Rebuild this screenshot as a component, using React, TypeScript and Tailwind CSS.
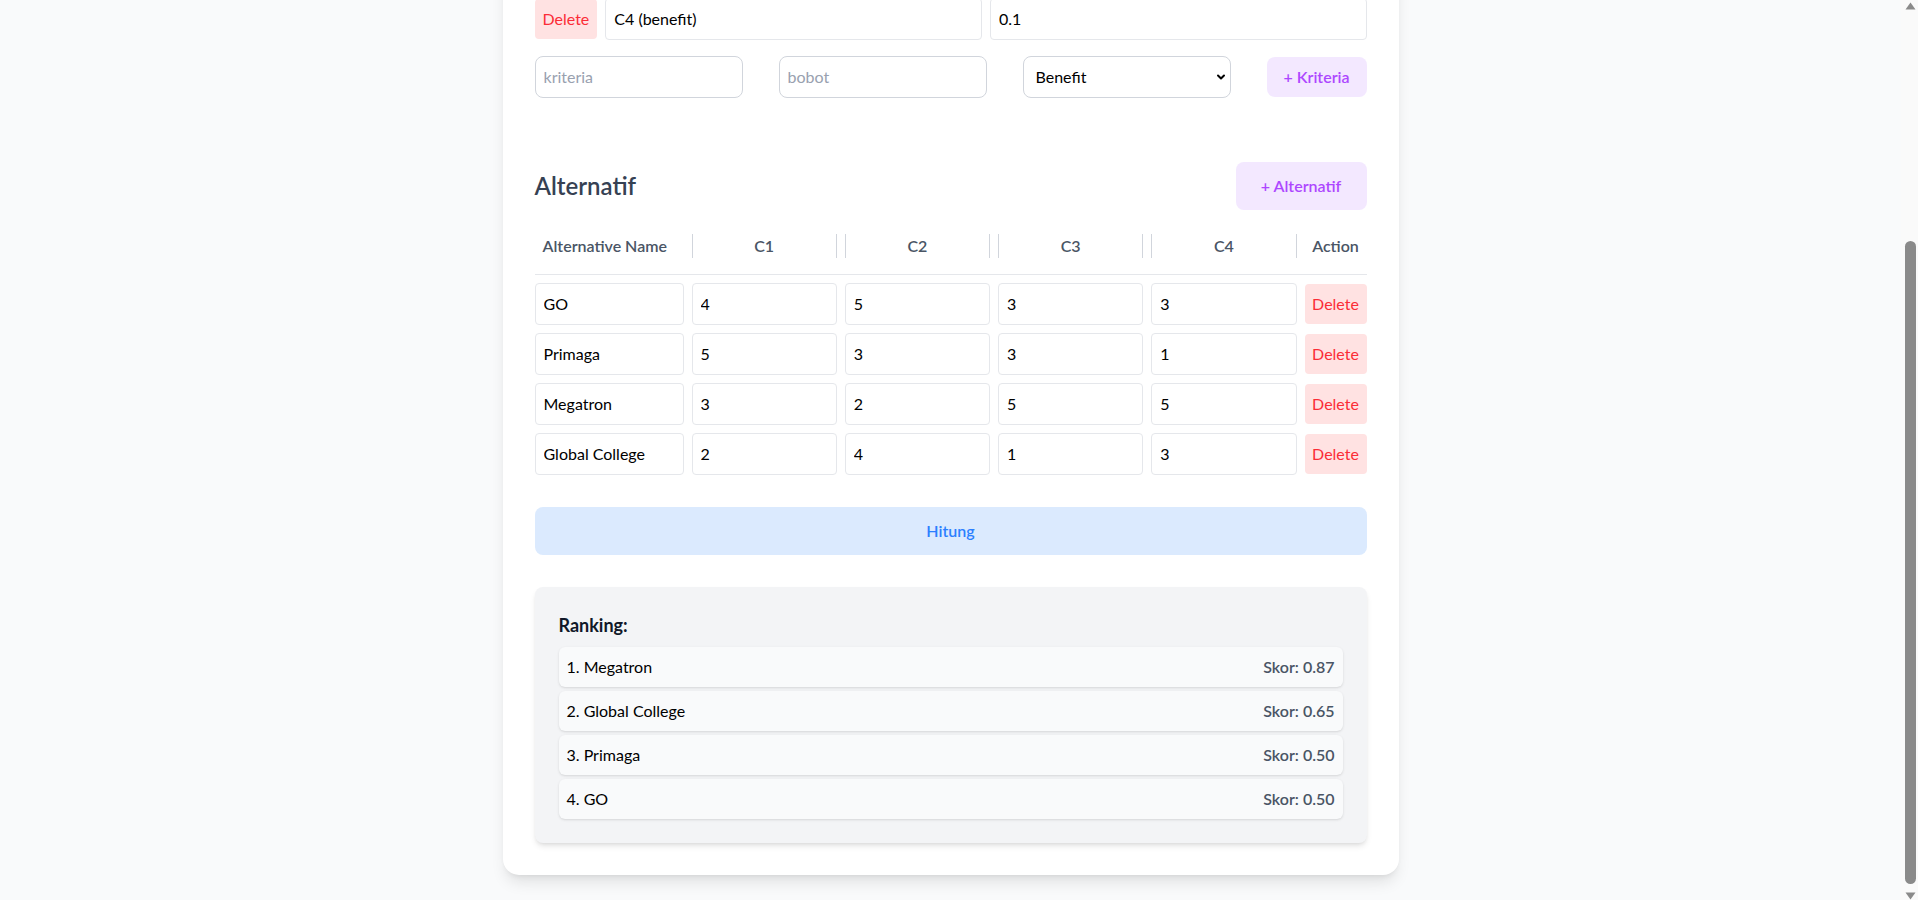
import { ChevronDown } from 'lucide-react';

const criteria = [
  { name: 'C1 (benefit)', weight: '0.3' },
  { name: 'C2 (cost)', weight: '0.2' },
  { name: 'C3 (benefit)', weight: '0.4' },
  { name: 'C4 (benefit)', weight: '0.1' },
];

const alternatives = [
  { name: 'GO', values: ['4', '5', '3', '3'] },
  { name: 'Primaga', values: ['5', '3', '3', '1'] },
  { name: 'Megatron', values: ['3', '2', '5', '5'] },
  { name: 'Global College', values: ['2', '4', '1', '3'] },
];

const ranking = [
  { name: 'Megatron', score: '0.87' },
  { name: 'Global College', score: '0.65' },
  { name: 'Primaga', score: '0.50' },
  { name: 'GO', score: '0.50' },
];

const cols = 'grid grid-cols-[149px_repeat(4,minmax(0,1fr))_62px] gap-2';

function Scrollbar() {
  // the browser's own scrollbar, page scrolled to the bottom
  return (
    <div className="w-[17px] shrink-0 bg-[#fafafa] flex flex-col items-center pl-[2px]">
      <svg width="11" height="8" viewBox="0 0 11 8" className="mt-[2px]">
        <path d="M5.5 0.5 L10.5 7.5 L0.5 7.5 Z" fill="#8a8a8a" />
      </svg>
      <div className="mt-[231px] h-[643px] w-[11px] rounded-full bg-[#8a8a8a]" />
      <svg width="11" height="8" viewBox="0 0 11 8" className="mt-[8px]">
        <path d="M0.5 0.5 L10.5 0.5 L5.5 7.5 Z" fill="#8a8a8a" />
      </svg>
    </div>
  );
}

export default function App() {
  return (
    <div className="flex h-screen w-full overflow-hidden bg-[#f9fafb] font-['Segoe_UI',Lato,sans-serif] text-black">
      <div className="flex flex-1 flex-col items-center justify-end overflow-hidden pb-[25px]">
        <div className="w-full max-w-4xl shrink-0 rounded-2xl bg-white p-8 shadow-lg">
          <h1 className="mb-8 text-center text-3xl font-bold text-gray-800">Sistem Pendukung Keputusan</h1>

          {/* Kriteria */}
          <div className="mb-16">
            <h2 className="mb-6 text-2xl font-semibold text-gray-700">Kriteria</h2>
            <div className="space-y-2">
              {criteria.map((c) => (
                <div key={c.name} className="flex items-center gap-2">
                  <button className="rounded bg-red-100 px-2 py-2 text-red-500">Delete</button>
                  <input
                    defaultValue={c.name}
                    className="min-w-0 flex-1 rounded border border-gray-200 p-2"
                  />
                  <input
                    defaultValue={c.weight}
                    className="min-w-0 flex-1 rounded border border-gray-200 p-2"
                  />
                </div>
              ))}
            </div>
            <div className="mt-4 flex items-center justify-between">
              <input
                placeholder="kriteria"
                className="w-52 rounded-lg border border-gray-300 p-2 placeholder:text-gray-400"
              />
              <input
                placeholder="bobot"
                className="w-52 rounded-lg border border-gray-300 p-2 placeholder:text-gray-400"
              />
              <div className="relative w-52">
                <select className="w-full appearance-none rounded-lg border border-gray-300 bg-white px-3 py-2">
                  <option>Benefit</option>
                  <option>Cost</option>
                </select>
                <ChevronDown
                  size={12}
                  strokeWidth={4}
                  className="pointer-events-none absolute right-[4px] top-1/2 -translate-y-1/2"
                />
              </div>
              <button className="w-[100px] rounded-lg bg-purple-100 py-2 font-semibold text-purple-500">
                + Kriteria
              </button>
            </div>
          </div>

          {/* Alternatif */}
          <div className="mb-6 flex items-center justify-between">
            <h2 className="text-2xl font-semibold text-gray-700">Alternatif</h2>
            <button className="w-[131px] rounded-lg bg-purple-100 py-3 font-semibold text-purple-500">
              + Alternatif
            </button>
          </div>

          <div className={`${cols} mb-2 border-b border-gray-200 pb-4 font-semibold text-gray-600`}>
            <div className="pl-2">Alternative Name</div>
            <div className="border-x border-gray-300 text-center">C1</div>
            <div className="border-x border-gray-300 text-center">C2</div>
            <div className="border-x border-gray-300 text-center">C3</div>
            <div className="border-x border-gray-300 text-center">C4</div>
            <div className="text-center">Action</div>
          </div>

          <div className="space-y-2">
            {alternatives.map((a) => (
              <div key={a.name} className={`${cols} items-center`}>
                <input defaultValue={a.name} className="w-full rounded border border-gray-200 p-2" />
                {a.values.map((v, i) => (
                  <input key={i} defaultValue={v} className="w-full rounded border border-gray-200 p-2" />
                ))}
                <button className="rounded bg-red-100 py-2 text-red-500">Delete</button>
              </div>
            ))}
          </div>

          <button className="mt-8 w-full rounded-lg bg-blue-100 py-3 font-semibold text-blue-500">Hitung</button>

          <div className="mt-8 rounded-lg bg-gray-100 p-6 shadow-md">
            <h3 className="mb-2 text-lg font-bold text-gray-900">Ranking:</h3>
            <ul className="space-y-1">
              {ranking.map((r, i) => (
                <li key={r.name} className="flex justify-between rounded-md bg-gray-50 p-2 shadow-sm">
                  <span>
                    {i + 1}. {r.name}
                  </span>
                  <span className="font-semibold text-gray-600">Skor: {r.score}</span>
                </li>
              ))}
            </ul>
          </div>
        </div>
      </div>
      <Scrollbar />
    </div>
  );
}
